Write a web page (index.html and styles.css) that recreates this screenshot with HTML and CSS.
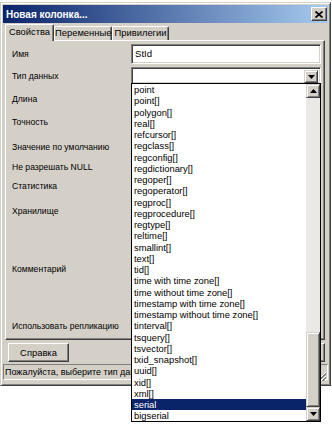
FILE: index.html
```html
<!DOCTYPE html>
<html lang="ru">
<head>
    <meta charset="UTF-8">
    <title>Новая колонка...</title>
    <link rel="stylesheet" href="styles.css">
</head>
<body>
    <div class="window">
        <div class="titlebar">
            <span class="title">Новая колонка...</span>
            <span class="close-btn">
                <svg width="8" height="7" viewBox="0 0 8 7"><path d="M0.5 0.5 L7.5 6.5 M7.5 0.5 L0.5 6.5" stroke="#000" stroke-width="1.8"/></svg>
            </span>
        </div>

        <div class="tabs">
            <div class="tab active tab-props">Свойства</div>
            <div class="tab tab-vars">Переменные</div>
            <div class="tab tab-privs">Привилегии</div>
        </div>

        <div class="panel">
            <div class="row r1">
                <label>Имя</label>
                <div class="edit">StId</div>
            </div>
            <div class="row r2">
                <label>Тип данных</label>
                <div class="combo">
                    <div class="combo-text"></div>
                    <span class="arrow-btn combo-btn">
                        <svg width="7" height="4" viewBox="0 0 7 4"><path d="M0 0 H7 L3.5 4 Z" fill="#000"/></svg>
                    </span>
                    <div class="dropdown">
                        <ul class="items">
                            <li>point</li>
                            <li>point[]</li>
                            <li>polygon[]</li>
                            <li>real[]</li>
                            <li>refcursor[]</li>
                            <li>regclass[]</li>
                            <li>regconfig[]</li>
                            <li>regdictionary[]</li>
                            <li>regoper[]</li>
                            <li>regoperator[]</li>
                            <li>regproc[]</li>
                            <li>regprocedure[]</li>
                            <li>regtype[]</li>
                            <li>reltime[]</li>
                            <li>smallint[]</li>
                            <li>text[]</li>
                            <li>tid[]</li>
                            <li>time with time zone[]</li>
                            <li>time without time zone[]</li>
                            <li>timestamp with time zone[]</li>
                            <li>timestamp without time zone[]</li>
                            <li>tinterval[]</li>
                            <li>tsquery[]</li>
                            <li>tsvector[]</li>
                            <li>txid_snapshot[]</li>
                            <li>uuid[]</li>
                            <li>xid[]</li>
                            <li>xml[]</li>
                            <li class="selected">serial</li>
                            <li>bigserial</li>
                        </ul>
                        <div class="scrollbar">
                            <span class="arrow-btn sb-btn">
                                <svg width="7" height="4" viewBox="0 0 7 4"><path d="M0 4 H7 L3.5 0 Z" fill="#000"/></svg>
                            </span>
                            <div class="sb-track"></div>
                            <div class="sb-thumb"></div>
                            <span class="arrow-btn sb-btn">
                                <svg width="7" height="4" viewBox="0 0 7 4"><path d="M0 0 H7 L3.5 4 Z" fill="#000"/></svg>
                            </span>
                        </div>
                    </div>
                </div>
            </div>
            <div class="row r3"><label>Длина</label></div>
            <div class="row r4"><label>Точность</label></div>
            <div class="row r5"><label>Значение по умолчанию</label></div>
            <div class="row r6"><label>Не разрешать NULL</label></div>
            <div class="row r7"><label>Статистика</label></div>
            <div class="row r8"><label>Хранилище</label></div>
            <div class="row r9"><label>Комментарий</label></div>
            <div class="row r10"><label>Использовать репликацию</label></div>
        </div>

        <div class="buttons">
            <button class="btn btn-help">Справка</button>
            <span class="spacer"></span>
            <button class="btn">OK</button>
            <button class="btn">Отмена</button>
        </div>

        <div class="statusbar">
            <span class="status">Пожалуйста, выберите тип данных.</span>
            <svg class="grip" width="11" height="11" viewBox="0 0 11 11">
                <path d="M10 1 L1 10 M10 5 L5 10 M10 9 L9 10" stroke="#fff" stroke-width="1"/>
                <path d="M10 2 L2 10 M10 3 L3 10 M10 6 L6 10 M10 7 L7 10" stroke="#808080" stroke-width="1"/>
            </svg>
        </div>
    </div>
</body>
</html>
```

FILE: styles.css
```css
* {
    box-sizing: border-box;
}

body {
    margin: 0;
    width: 332px;
    height: 426px;
    overflow: hidden;
    background: #fff;
    font-family: "Liberation Sans", Arial, sans-serif;
    font-size: 9px;
    color: #000;
}

.window {
    margin-top: 2px;
    width: 331px;
    height: 384px;
    background: #d4d0c8;
    border: 1px solid;
    border-color: #d4d0c8 #404040 #404040 #d4d0c8;
    box-shadow: inset 1px 1px #fff, inset -1px -1px #808080;
    padding: 2px;
    display: flex;
    flex-direction: column;
}

.titlebar {
    height: 18px;
    flex: none;
    background: linear-gradient(to right, #0a246a, #a6caf0);
    display: flex;
    align-items: center;
    justify-content: space-between;
    padding: 0 1px 0 3px;
}

.title {
    color: #fff;
    font-weight: bold;
    font-size: 10px;
}

.close-btn {
    width: 16px;
    height: 14px;
    background: #d4d0c8;
    border: 1px solid;
    border-color: #fff #404040 #404040 #fff;
    box-shadow: inset -1px -1px #808080;
    display: flex;
    align-items: center;
    justify-content: center;
}

/* tabs */
.tabs {
    height: 16px;
    flex: none;
    margin-top: 1px;
    padding-left: 2px;
    display: flex;
    align-items: flex-end;
    position: relative;
    z-index: 1;
    font-size: 9.4px;
}

.tab {
    height: 14px;
    line-height: 12px;
    text-align: center;
    border-top: 1px solid #fff;
    border-left: 1px solid #fff;
    border-right: 1px solid #404040;
    box-shadow: inset -1px 0 #808080;
    border-radius: 2px 2px 0 0;
    background: #d4d0c8;
}

.tab.active {
    height: 17px;
    line-height: 14px;
    margin-bottom: -1px;
}

.tab-props { width: 49px; }
.tab-vars { width: 58px; }
.tab-privs { width: 57px; }

/* property page */
.panel {
    height: 300px;
    flex: none;
    margin: 0 3px 0 2px;
    border: 1px solid;
    border-color: #fff #404040 #404040 #fff;
    box-shadow: inset -1px -1px #808080;
    padding: 2px 3px 0 6px;
}

.row {
    display: grid;
    grid-template-columns: 119px 1fr;
    align-items: center;
}

.row label {
    font-size: 8.6px;
    white-space: nowrap;
}

.r1 { height: 21px; }
.r2 { height: 24px; align-items: start; }
.r2 label { align-self: center; }
.r3 { height: 22px; }
.r4 { height: 24px; }
.r5 { height: 26px; }
.r6 { height: 14px; }
.r7 { height: 24px; }
.r8 { height: 26px; }
.r9 { height: 90px; }
.r10 { height: 24px; }

.edit {
    height: 20px;
    background: #fff;
    border: 1px solid;
    border-color: #808080 #fff #fff #808080;
    box-shadow: inset 1px 1px #404040, inset -1px -1px #d4d0c8;
    padding: 0 3px;
    line-height: 18px;
    font-size: 9.6px;
}

.combo {
    position: relative;
    margin-top: 3px;
    height: 17px;
    background: #fff;
    border: 1px solid;
    border-color: #808080 #fff #fff #808080;
    box-shadow: inset 1px 1px #404040, inset -1px -1px #d4d0c8;
    padding: 2px;
    display: flex;
    justify-content: space-between;
}

.arrow-btn {
    width: 14px;
    background: #d4d0c8;
    border: 1px solid;
    border-color: #d4d0c8 #404040 #404040 #d4d0c8;
    box-shadow: inset 1px 1px #fff, inset -1px -1px #808080;
    display: flex;
    align-items: center;
    justify-content: center;
    flex: none;
}

.combo-btn {
    height: 13px;
}

/* open drop-down list */
.dropdown {
    position: absolute;
    top: 100%;
    left: -1px;
    width: 190px;
    height: 339px;
    background: #fff;
    border: 1px solid #000;
    display: flex;
    z-index: 5;
}

.items {
    list-style: none;
    margin: 0;
    padding: 0;
    flex: 1;
    font-size: 9.4px;
}

.items li {
    height: 11.25px;
    line-height: 11.25px;
    padding-left: 2px;
    white-space: nowrap;
}

.items li.selected {
    background: #0a246a;
    color: #fff;
}

.scrollbar {
    width: 14px;
    display: flex;
    flex-direction: column;
}

.sb-btn {
    height: 14px;
}

.sb-track {
    flex: 1;
    background: #ebe9e5;
}

.sb-thumb {
    height: 75px;
    background: #d4d0c8;
    border: 1px solid;
    border-color: #d4d0c8 #404040 #404040 #d4d0c8;
    box-shadow: inset 1px 1px #fff, inset -1px -1px #808080;
}

/* bottom buttons */
.buttons {
    height: 19px;
    flex: none;
    margin-top: 3px;
    padding: 0 3px 0 5px;
    display: flex;
    gap: 4px;
}

.spacer {
    flex: 1;
}

.btn {
    width: 61px;
    height: 19px;
    padding: 0;
    font-family: inherit;
    font-size: 9.4px;
    color: #000;
    background: #d4d0c8;
    border: 1px solid;
    border-color: #fff #404040 #404040 #fff;
    box-shadow: inset -1px -1px #808080;
}

.statusbar {
    height: 16px;
    flex: none;
    margin-top: 2px;
    border: 1px solid;
    border-color: #808080 #fff #fff #808080;
    padding-left: 1px;
    display: flex;
    align-items: center;
    justify-content: space-between;
    font-size: 9px;
}

/* the open list covers the rest of the hint */
.status {
    width: 126px;
    overflow: hidden;
    white-space: nowrap;
}

.grip {
    align-self: flex-end;
    margin-bottom: -3px;
}
```
